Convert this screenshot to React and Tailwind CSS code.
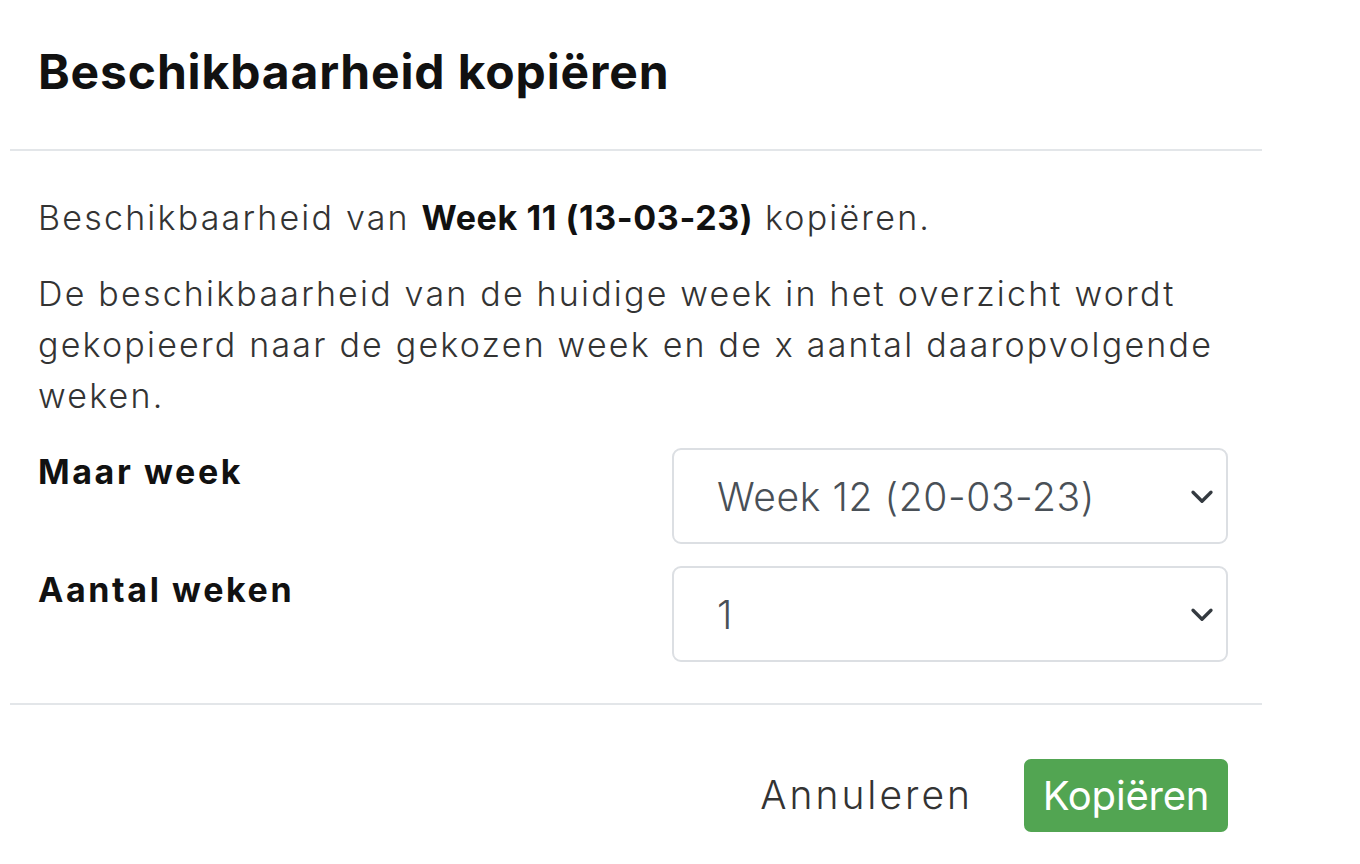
import React from "react";

function Chevron() {
  return (
    <svg width="24" height="18" viewBox="0 0 16 12" className="shrink-0">
      <path d="m2 3.5 6 6 6-6" fill="none" stroke="#343a40" strokeWidth="2.2" strokeLinecap="round" strokeLinejoin="round" />
    </svg>
  );
}

function SelectBox({ value }) {
  return (
    <div className="h-[96px] w-[556px] rounded-[9px] border-[2px] border-[#dcdfe3] bg-white flex items-center justify-between pl-[43px] pr-[12px]">
      <span className="text-[39px] text-[#495057] font-light whitespace-nowrap tracking-[0.6px]">{value}</span>
      <Chevron />
    </div>
  );
}

export default function App() {
  return (
    <div className="w-[1360px] h-[864px] bg-white overflow-hidden" style={{ fontFamily: "Inter, 'Open Sans', sans-serif" }}>
      <div className="ml-[10px] w-[1252px]">
        <div className="h-[151px] border-b-[2px] border-[#e3e6e9] flex items-center pl-[28px] pb-[6px]">
          <h1 className="text-[48px] font-bold text-[#111] tracking-[0.85px]">Beschikbaarheid kopiëren</h1>
        </div>
        <div className="pl-[28px] pr-[35px] pt-[41px] pb-[41px] text-[34px] leading-[51px] text-[#333] font-light tracking-[2.2px]">
          <p className="whitespace-nowrap">
            Beschikbaarheid van <span className="font-bold text-[#111] tracking-[0.6px]">Week 11 (13-03-23)</span> kopiëren.
          </p>
          <p className="mt-[25px] whitespace-nowrap">
            De beschikbaarheid van de huidige week in het overzicht wordt
            <br />
            gekopieerd naar de gekozen week en de x aantal daaropvolgende
            <br />
            weken.
          </p>
          <div className="mt-[27px] grid grid-cols-[634px_556px] gap-y-[22px]">
            <div className="font-bold text-[#111] -mt-[2px] tracking-[2.6px]">Maar week</div>
            <SelectBox value="Week 12 (20-03-23)" />
            <div className="font-bold text-[#111] -mt-[2px] tracking-[2.6px]">Aantal weken</div>
            <SelectBox value="1" />
          </div>
        </div>
        <div className="border-t-[2px] border-[#e3e6e9] flex justify-end items-center pr-[34px] pt-[54px] gap-[51px]">
          <span className="text-[39px] text-[#333] font-light tracking-[3px]">Annuleren</span>
          <button className="h-[73px] w-[204px] rounded-[7px] bg-[#52a552] text-white text-[40px] font-normal tracking-[-0.2px]">Kopiëren</button>
        </div>
      </div>
    </div>
  );
}
